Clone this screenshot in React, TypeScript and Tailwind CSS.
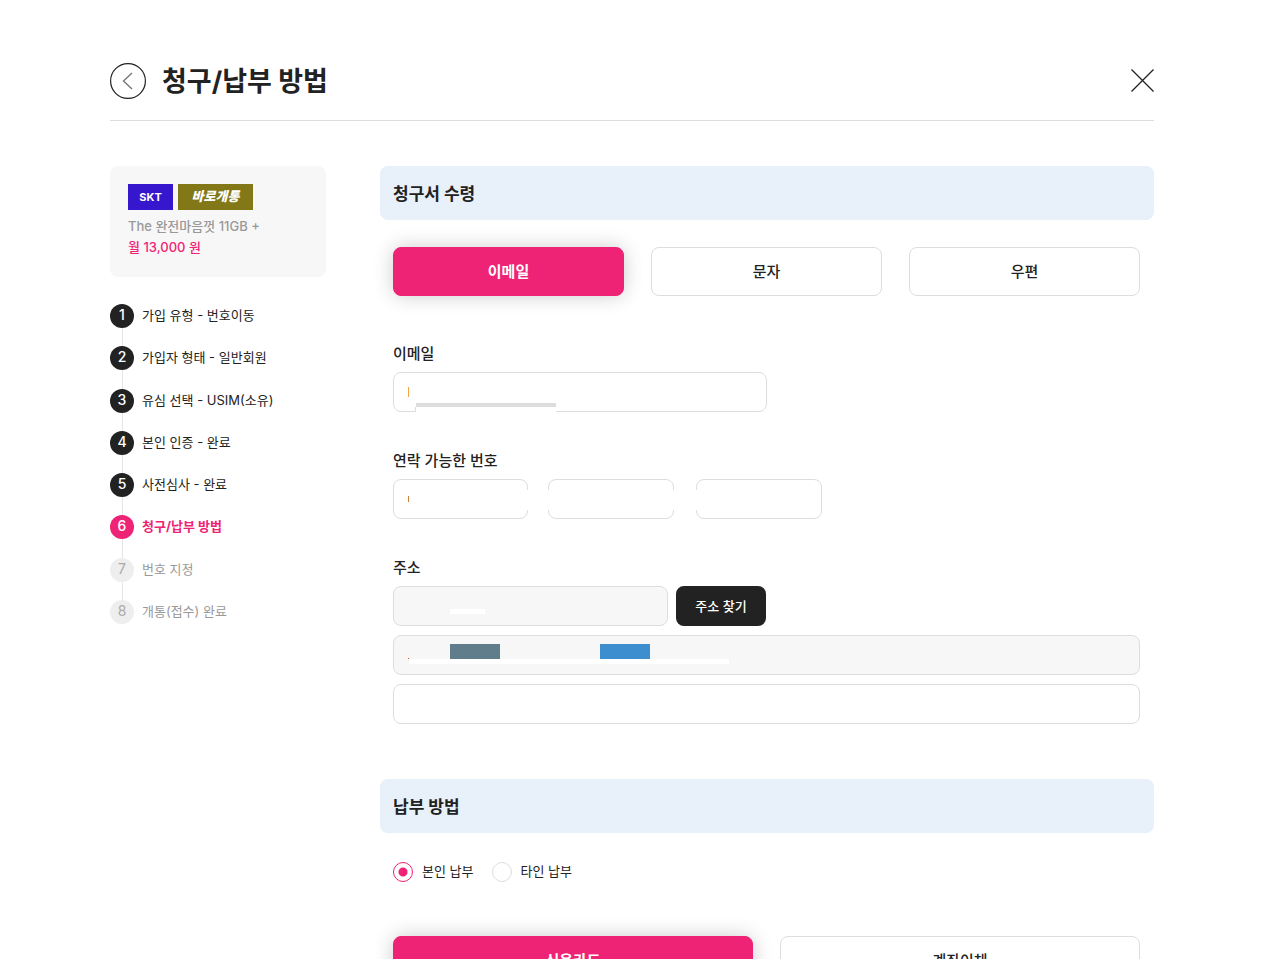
import React, { useState } from "react";

const steps = [
  "가입 유형 - 번호이동",
  "가입자 형태 - 일반회원",
  "유심 선택 - USIM(소유)",
  "본인 인증 - 완료",
  "사전심사 - 완료",
  "청구/납부 방법",
  "번호 지정",
  "개통(접수) 완료",
];
const currentStep = 5;

const fieldClass = "block h-10 min-w-0 rounded-lg border border-[#dddddd] px-[14px] text-[13px] outline-none";
const labelClass = "mb-[6px] block w-fit pt-px text-[15px] leading-6 font-medium";

function StepItem({ index, text }: { index: number; text: string }) {
  const current = index === currentStep;
  const done = index < currentStep;
  const circle = current
    ? "bg-[#ef2375] font-medium text-white"
    : done
      ? "bg-[#222222] font-medium text-white"
      : "bg-[#eeeeee] text-[#aaaaaa]";
  const label = current ? "font-bold text-[#ef2375]" : done ? "" : "text-[#999999]";
  return (
    <li className="relative flex gap-2 text-[13px] leading-[22px]" aria-current={current ? "step" : undefined}>
      <span className={`flex size-6 shrink-0 justify-center rounded-full text-sm leading-[22px] ${circle}`}>{index + 1}</span>
      <span className={label}>{text}</span>
    </li>
  );
}

function SectionTitle({ children }: { children: React.ReactNode }) {
  return <h2 className="rounded-lg bg-[#e8f0fa] px-[13px] pt-[2px] text-[17px] leading-[52px] font-bold">{children}</h2>;
}

function Choice({ text, active, onClick }: { text: string; active: boolean; onClick: () => void }) {
  return (
    <button
      type="button"
      aria-pressed={active}
      onClick={onClick}
      className={`h-[49px] flex-1 rounded-lg border pt-[2px] text-[15px] ${
        active ? "border-[#ef2375] bg-[#ef2375] font-bold text-white shadow-[0_0_20px_rgba(0,0,0,0.2)]" : "border-[#dddddd] bg-white font-medium"
      }`}
    >
      {text}
    </button>
  );
}

export default function App() {
  const [receipt, setReceipt] = useState("이메일");
  const [payment, setPayment] = useState("신용카드");

  return (
    <div className="h-screen overflow-hidden bg-white pr-[15px] font-['Inter','Noto_Sans_CJK_KR',sans-serif] text-[#222222]">
      <div className="mx-auto max-w-[1044px] pt-[63px]">
        <header className="flex items-start border-b border-[#dddddd] pb-[21px]">
          <button type="button" aria-label="이전" className="size-9 shrink-0">
            <svg viewBox="0 0 36 36" className="size-9" fill="none">
              <circle cx="18" cy="18" r="17.4" stroke="#222" strokeWidth="1.2" />
              <path d="M22 10 13.5 18 22 26" stroke="#777" strokeWidth="1.4" />
            </svg>
          </button>
          <h1 className="ml-4 flex-1 pt-px text-[27px] leading-[35px] font-bold">청구/납부 방법</h1>
          <button type="button" aria-label="닫기" className="pt-[6px]">
            <svg viewBox="0 0 23 23" className="size-[23px]" fill="none" stroke="#222" strokeWidth="1.3">
              <path d="M.5.5l22 22M22.500.5l-22 22" />
            </svg>
          </button>
        </header>

        <div className="mt-[45px] flex items-start gap-[54px]">
          <aside className="w-[216px] shrink-0">
            <div className="rounded-lg bg-[#f7f7f7] px-[18px] pt-[18px] pb-[19px]">
              <div className="flex gap-[5px] text-white">
                <span className="w-[45px] bg-[#3617ce] text-center text-[11px] leading-[26px] font-bold">SKT</span>
                <span className="w-[75px] bg-[#837817] text-center text-[13px] leading-6 font-black italic">바로개통</span>
              </div>
              <p className="mt-[6px] text-[13px] leading-[21px] font-medium text-[#999999]">The 완전마음껏 11GB +</p>
              <p className="text-[13px] leading-[21px] font-medium text-[#ef2375]">월 13,000 원</p>
            </div>
            <div className="relative mt-[27px]">
              <div className="absolute inset-y-3 left-3 w-px bg-[#e5e5e5]" />
              <ol className="flex min-h-80 flex-col justify-between">
                {steps.map((text, i) => (
                  <StepItem key={text} index={i} text={text} />
                ))}
              </ol>
            </div>
          </aside>

          <main className="min-w-0 flex-1">
            <section>
              <SectionTitle>청구서 수령</SectionTitle>
              <div className="mt-[27px] pr-[14px] pl-[13px]">
                <div className="flex gap-[27px]">
                  {["이메일", "문자", "우편"].map((t) => (
                    <Choice key={t} text={t} active={receipt === t} onClick={() => setReceipt(t)} />
                  ))}
                </div>

                <div className="mt-[45px]">
                  <label htmlFor="email" className={labelClass}>이메일</label>
                  <div className="relative w-1/2">
                    <input id="email" type="email" className={`${fieldClass} w-full`} />
                    <span className="pointer-events-none absolute top-[15px] left-[15px] h-[10px] w-px bg-[#efa64b]" />
                    <span className="pointer-events-none absolute top-[31px] left-[23px] h-[9px] w-[140px] border-t-4 border-[#dddddd] bg-white" />
                    <span className="pointer-events-none absolute top-[35px] left-[22px] h-[5px] w-px bg-[#dddddd]" />
                  </div>
                </div>

                <div className="mt-9">
                  <label htmlFor="phone1" className={labelClass}>연락 가능한 번호</label>
                  <div className="relative flex w-fit">
                    <input id="phone1" type="tel" className={`${fieldClass} w-[135px]`} />
                    <input aria-label="연락처 중간 자리" type="tel" className={`${fieldClass} ml-5 w-[126px]`} />
                    <input aria-label="연락처 끝자리" type="tel" className={`${fieldClass} ml-[22px] w-[126px]`} />
                    <span className="pointer-events-none absolute top-[17px] left-[15px] h-[6px] w-px bg-[#c9813a]" />
                    <span className="pointer-events-none absolute top-[11px] left-[17px] h-5 w-[300px] bg-white" />
                  </div>
                </div>

                <div className="mt-9">
                  <label htmlFor="zip" className={labelClass}>주소</label>
                  <div className="flex flex-col gap-[9px]">
                    <div className="flex gap-2">
                      <div className="relative w-[275px]">
                        <input id="zip" readOnly className={`${fieldClass} w-full bg-[#f7f7f7]`} />
                        <span className="pointer-events-none absolute top-[23px] left-[57px] h-[5px] w-[35px] bg-white" />
                      </div>
                      <button type="button" className="h-10 w-[90px] rounded-lg bg-[#222222] pt-[2px] text-[13px] font-medium text-white">주소 찾기</button>
                    </div>
                    <div className="relative">
                      <input aria-label="기본 주소" readOnly className={`${fieldClass} w-full bg-[#f7f7f7]`} />
                      <span className="pointer-events-none absolute top-[23px] left-[15px] size-px bg-[#c05a2a]" />
                      <span className="pointer-events-none absolute top-[9px] left-[57px] h-[15px] w-[50px] bg-[#607d8b]" />
                      <span className="pointer-events-none absolute top-[9px] left-[207px] h-[15px] w-[50px] bg-[#3d8ecf]" />
                      <span className="pointer-events-none absolute top-[24px] left-[16px] h-[5px] w-[320px] bg-white" />
                    </div>
                    <input aria-label="상세 주소" className={`${fieldClass} w-full`} />
                  </div>
                </div>
              </div>
            </section>

            <section className="mt-[55px]">
              <SectionTitle>납부 방법</SectionTitle>
              <div className="mt-[29px] pr-[14px] pl-[13px]">
                <div className="flex gap-[18px] text-[13px] leading-[18px]">
                  {["본인 납부", "타인 납부"].map((t, i) => (
                    <label key={t} className="flex gap-[9px]">
                      <input
                        type="radio"
                        name="payer"
                        defaultChecked={i === 0}
                        className="size-5 appearance-none rounded-full border border-[#dddddd] bg-white checked:border-[#ef2375] checked:bg-[radial-gradient(circle,#ef2375_4px,transparent_5px)]"
                      />
                      {t}
                    </label>
                  ))}
                </div>
                <div className="mt-[54px] flex gap-[27px]">
                  {["신용카드", "계좌이체"].map((t) => (
                    <Choice key={t} text={t} active={payment === t} onClick={() => setPayment(t)} />
                  ))}
                </div>
              </div>
            </section>
          </main>
        </div>
      </div>
    </div>
  );
}
